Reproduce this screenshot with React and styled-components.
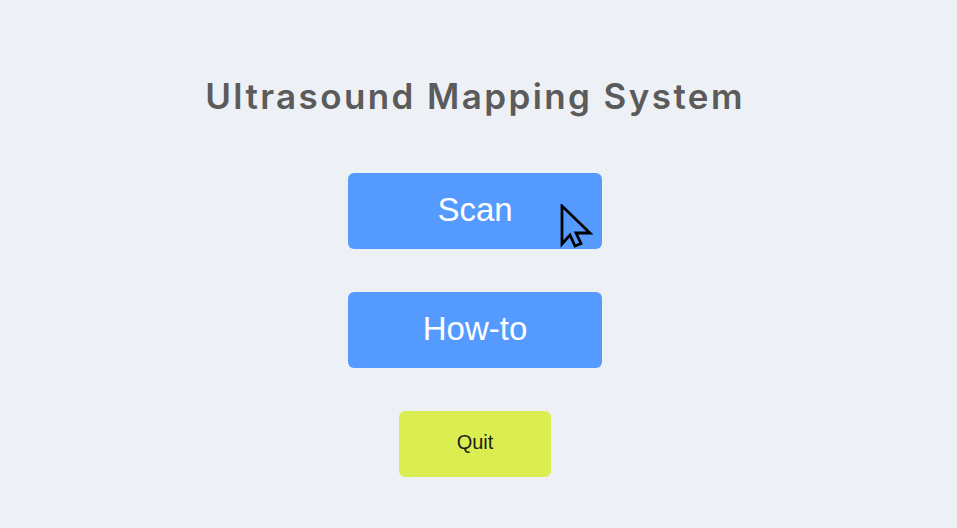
import React from 'react'
import styled, { createGlobalStyle } from 'styled-components'

const GlobalStyle = createGlobalStyle`
    html, body {
        margin: 0;
        padding: 0;
        background: #edf1f6;
    }
    body {
        font-family: "Liberation Sans", Arial, sans-serif;
    }
`

const Page = styled.div`
    width: 950px;
    height: 528px;
    display: flex;
    flex-direction: column;
    align-items: center;
    box-sizing: border-box;
    padding-top: 74px;
`

const Title = styled.h1`
    margin: 0 0 55px 0;
    font-family: Inter, "Noto Sans", sans-serif;
    font-weight: 600;
    font-size: 35px;
    line-height: 44px;
    letter-spacing: 2.4px;
    color: #5b5b5b;
`

const Menu = styled.div`
    display: flex;
    flex-direction: column;
    align-items: center;
    gap: 43px;
`

const MenuButton = styled.button`
    position: relative;
    width: ${p => p.$small ? '152px' : '254px'};
    height: ${p => p.$small ? '66px' : '76px'};
    border: none;
    border-radius: 6px;
    background: ${p => p.$small ? '#dbee51' : '#559aff'};
    color: ${p => p.$small ? '#1e1e1e' : '#ffffff'};
    font-family: "Liberation Sans", Arial, sans-serif;
    font-size: ${p => p.$small ? '20px' : '33px'};
    padding: 0 0 3px 0;
    cursor: pointer;
`

const Pointer = styled.svg`
    position: absolute;
    left: 212px;
    top: 31px;
    width: 34px;
    height: 46px;
    pointer-events: none;
`

const Cursor = () => (
    <Pointer viewBox="0 0 34 46">
        <path
            d="M2 2 L2 40 L10 31 L15 42 L21 39.5 L16 29 L30 29 Z"
            fill="none"
            stroke="#000"
            strokeWidth="2.8"
            strokeLinejoin="miter"
        />
    </Pointer>
)

export default function App() {
    return (
        <>
            <GlobalStyle />
            <Page>
                <Title>Ultrasound Mapping System</Title>
                <Menu>
                    <MenuButton>
                        Scan
                        <Cursor />
                    </MenuButton>
                    <MenuButton>How-to</MenuButton>
                    <MenuButton $small>Quit</MenuButton>
                </Menu>
            </Page>
        </>
    )
}
